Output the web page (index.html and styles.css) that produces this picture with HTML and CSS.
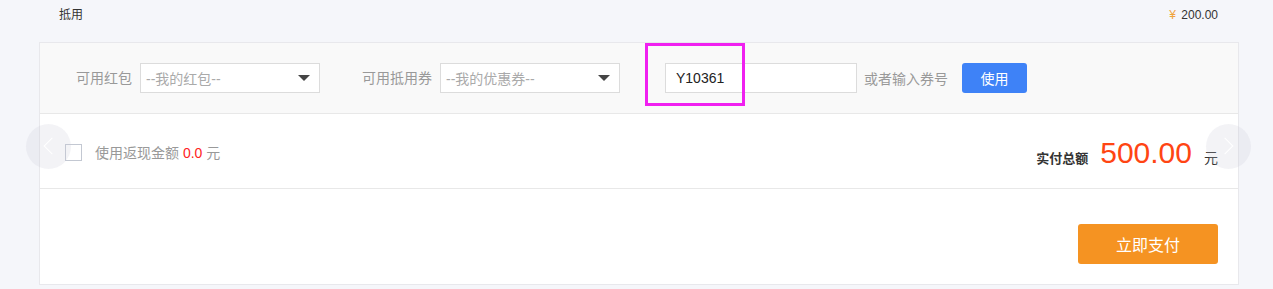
FILE: index.html
```html
<!DOCTYPE html>
<html lang="zh-CN">
<head>
    <meta charset="UTF-8">
    <title>支付</title>
    <link rel="stylesheet" href="styles.css">
</head>
<body>
    <div class="wrap">
        <div class="deduct-row">
            <span>抵用</span>
            <span class="deduct-amount"><i>¥</i> 200.00</span>
        </div>

        <div class="panel">
            <div class="coupon-bar">
                <label class="field-label">可用红包</label>
                <div class="select">
                    <span>--我的红包--</span>
                    <b class="caret"></b>
                </div>
                <label class="field-label gap-left">可用抵用券</label>
                <div class="select">
                    <span>--我的优惠券--</span>
                    <b class="caret"></b>
                </div>
                <input class="code-input" type="text" value="Y10361">
                <span class="hint">或者输入券号</span>
                <button class="btn-use">使用</button>
            </div>

            <div class="total-row">
                <div class="cashback">
                    <span class="checkbox"></span>
                    <span>使用返现金额 <em>0.0</em> 元</span>
                </div>
                <div class="total">
                    <span class="total-label">实付总额</span>
                    <span class="total-num">500.00</span>
                    <span class="total-unit">元</span>
                </div>
            </div>

            <div class="pay-row">
                <button class="btn-pay">立即支付</button>
            </div>

            <!-- carousel arrows -->
            <span class="arrow arrow-left"></span>
            <span class="arrow arrow-right"></span>
            <!-- highlight box -->
            <span class="mark"></span>
        </div>
    </div>
</body>
</html>
```

FILE: styles.css
```css
body {
    margin: 0;
    padding: 0;
    background-color: #f5f6fa;
    font-family: "Liberation Sans", "Noto Sans CJK SC", sans-serif;
    color: #333;
    font-size: 14px;
}

.wrap {
    width: 1200px;
    margin-left: 39px;
}

.deduct-row {
    display: flex;
    justify-content: space-between;
    align-items: center;
    height: 42px;
    padding: 0 21px 12px 20px;
    box-sizing: border-box;
    font-size: 12px;
    line-height: 14px;
}

.deduct-amount i {
    font-style: normal;
    color: #f0a33c;
    margin-right: 2px;
}

.panel {
    position: relative;
    background-color: #fff;
    border: 1px solid #e8e8ec;
}

.coupon-bar {
    display: flex;
    align-items: center;
    height: 70px;
    padding-left: 36px;
    background-color: #f9f9f9;
    border-bottom: 1px solid #e8e8e8;
}

.field-label {
    color: #999;
    margin-right: 8px;
    line-height: 20px;
}

.field-label.gap-left {
    margin-left: 42px;
}

.select {
    display: flex;
    align-items: center;
    justify-content: space-between;
    width: 180px;
    height: 30px;
    box-sizing: border-box;
    border: 1px solid #dcdcdc;
    background-color: #fff;
    padding: 0 9px 0 5px;
    color: #aaa;
}

.caret {
    width: 0;
    height: 0;
    border-left: 6px solid transparent;
    border-right: 6px solid transparent;
    border-top: 6px solid #444;
}

.code-input {
    width: 192px;
    height: 30px;
    box-sizing: border-box;
    margin-left: 45px;
    border: 1px solid #dcdcdc;
    padding: 0 10px;
    font-family: inherit;
    font-size: 14px;
    color: #222;
    outline: none;
}

.hint {
    color: #999;
    margin-left: 7px;
}

.btn-use {
    margin-left: 14px;
    width: 65px;
    height: 30px;
    border: none;
    border-radius: 3px;
    background-color: #3e82f7;
    color: #fff;
    font-family: inherit;
    font-size: 14px;
    cursor: pointer;
}

.total-row {
    display: flex;
    justify-content: space-between;
    align-items: center;
    height: 74px;
    padding: 0 20px 0 25px;
    border-bottom: 1px solid #e8e8e8;
}

.cashback {
    display: flex;
    align-items: center;
    color: #999;
    margin-top: 2px;
}

.cashback em {
    font-style: normal;
    color: #ff2222;
}

.checkbox {
    width: 15px;
    height: 15px;
    border: 1px solid #c3c8d2;
    margin-right: 13px;
}

.total {
    display: flex;
    align-items: baseline;
    margin-top: 4px;
}

.total-label {
    font-weight: bold;
    font-size: 13px;
    color: #333;
}

.total-num {
    font-size: 30px;
    color: #ff4513;
    margin: 0 12px;
}

.total-unit {
    color: #333;
}

.pay-row {
    display: flex;
    justify-content: flex-end;
    padding: 35px 20px 20px 0;
}

.btn-pay {
    width: 140px;
    height: 40px;
    border: none;
    border-radius: 3px;
    background-color: #f59322;
    color: #fff;
    font-family: inherit;
    font-size: 16px;
    cursor: pointer;
}

.arrow {
    position: absolute;
    top: 81px;
    width: 45px;
    height: 45px;
    border-radius: 50%;
    background-color: rgba(200, 202, 215, 0.22);
}

.arrow::after {
    content: "";
    position: absolute;
    top: 16px;
    width: 11px;
    height: 11px;
    border-left: 1px solid #fff;
    border-bottom: 1px solid #fff;
}

.arrow-left {
    left: -14px;
}

.arrow-left::after {
    left: 20px;
    transform: rotate(45deg);
}

.arrow-right {
    right: -13px;
}

.arrow-right::after {
    left: 13px;
    transform: rotate(-135deg);
}

.mark {
    position: absolute;
    left: 605px;
    top: 0;
    width: 94px;
    height: 57px;
    border: 3px solid #f020f0;
}
```
